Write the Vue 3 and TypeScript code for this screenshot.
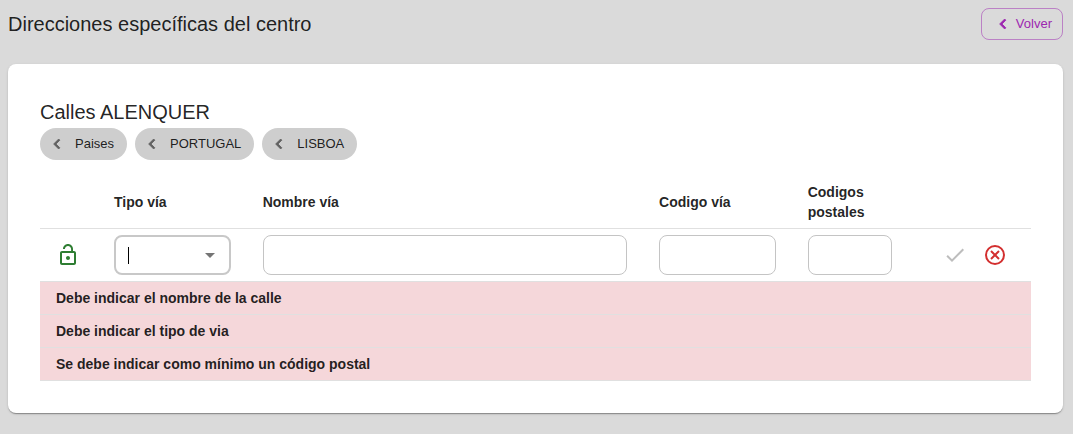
<script setup lang="ts">
import { ref } from 'vue'

const crumbs: string[] = ['Paises', 'PORTUGAL', 'LISBOA']

const errors: string[] = [
  'Debe indicar el nombre de la calle',
  'Debe indicar el tipo de via',
  'Se debe indicar como mínimo un código postal',
]

const streetType = ref('')
const streetName = ref('')
const streetCode = ref('')
const postalCodes = ref('')
</script>

<template>
  <div class="page">
    <header class="topbar">
      <h1 class="title">Direcciones específicas del centro</h1>
      <button type="button" class="back">
        <svg class="chevron" viewBox="0 0 24 24" aria-hidden="true">
          <path d="M15.41 7.41 14 6l-6 6 6 6 1.41-1.41L10.83 12z" />
        </svg>
        Volver
      </button>
    </header>

    <main class="card">
      <h2 class="title">Calles ALENQUER</h2>
      <nav class="crumbs">
        <button v-for="crumb in crumbs" :key="crumb" type="button" class="chip">
          <svg class="chevron" viewBox="0 0 24 24" aria-hidden="true">
            <path d="M15.41 7.41 14 6l-6 6 6 6 1.41-1.41L10.83 12z" />
          </svg>
          {{ crumb }}
        </button>
      </nav>

      <table class="grid">
        <colgroup>
          <col class="col-lock" />
          <col class="col-type" />
          <col class="col-name" />
          <col class="col-code" />
          <col class="col-postal" />
          <col />
        </colgroup>
        <thead>
          <tr>
            <th></th>
            <th><label for="type">Tipo vía</label></th>
            <th><label for="name">Nombre vía</label></th>
            <th><label for="code">Codigo vía</label></th>
            <th><label for="postal">Codigos postales</label></th>
            <th></th>
          </tr>
        </thead>
        <tbody>
          <tr>
            <td>
              <button type="button" class="icon-button lock" aria-label="Desbloqueado">
                <svg viewBox="0 0 24 24" aria-hidden="true">
                  <path
                    d="M12 17c1.1 0 2-.9 2-2s-.9-2-2-2-2 .9-2 2 .9 2 2 2zm6-9h-1V6c0-2.76-2.24-5-5-5S7 3.24 7 6h1.9c0-1.71 1.39-3.1 3.1-3.1 1.71 0 3.1 1.39 3.1 3.1v2H6c-1.1 0-2 .9-2 2v10c0 1.1.9 2 2 2h12c1.1 0 2-.9 2-2V10c0-1.1-.9-2-2-2zm0 12H6V10h12v10z"
                  />
                </svg>
              </button>
            </td>
            <td>
              <div class="combo">
                <span class="caret"></span>
                <input id="type" v-model="streetType" class="combo-input" role="combobox" aria-expanded="false" />
                <button type="button" class="combo-toggle" aria-label="Abrir">
                  <svg viewBox="0 0 24 24" aria-hidden="true"><path d="m7 10 5 5 5-5z" /></svg>
                </button>
              </div>
            </td>
            <td><input id="name" v-model="streetName" class="field" type="text" /></td>
            <td><input id="code" v-model="streetCode" class="field" type="text" /></td>
            <td><input id="postal" v-model="postalCodes" class="field" type="text" /></td>
            <td>
              <div class="actions">
                <button type="button" class="icon-button accept" aria-label="Guardar" disabled>
                  <svg viewBox="0 0 24 24" aria-hidden="true">
                    <path d="M9 16.17 4.83 12l-1.42 1.41L9 19 21 7l-1.41-1.41z" />
                  </svg>
                </button>
                <button type="button" class="icon-button cancel" aria-label="Cancelar">
                  <svg viewBox="0 0 24 24" aria-hidden="true">
                    <circle cx="12" cy="12" r="9" />
                    <path d="m8 8 8 8M16 8l-8 8" />
                  </svg>
                </button>
              </div>
            </td>
          </tr>
          <tr v-for="error in errors" :key="error" class="error">
            <td colspan="6">{{ error }}</td>
          </tr>
        </tbody>
      </table>
    </main>
  </div>
</template>

<style>
html,
body {
  min-height: 100%;
  background: #dadada;
}
</style>

<style scoped>
.page {
  box-sizing: border-box;
  padding: 8px 10px 20px 8px;
  font-family: 'Liberation Sans', Arial, sans-serif;
  font-size: 14px;
  line-height: 20px;
  color: rgba(0, 0, 0, 0.87);
}

svg {
  display: block;
  fill: currentColor;
}

button,
input {
  box-sizing: border-box;
  margin: 0;
  font: inherit;
  color: inherit;
}

.topbar {
  display: flex;
  align-items: center;
  justify-content: space-between;
  margin-bottom: 24px;
}

.title {
  margin: 0;
  font-size: 20px;
  font-weight: 400;
  line-height: 32px;
}

.back {
  display: flex;
  align-items: center;
  gap: 3px;
  height: 32px;
  padding: 0 10px 0 11px;
  border: 1px solid rgba(156, 39, 176, 0.5);
  border-radius: 8px;
  background: transparent;
  color: #9c27b0;
  font-size: 13px;
}

.chevron {
  width: 20px;
  height: 20px;
  stroke: currentColor;
}

.card {
  padding: 32px;
  border-radius: 8px;
  background: #fff;
  box-shadow:
    0 2px 1px -1px rgba(0, 0, 0, 0.2),
    0 1px 1px 0 rgba(0, 0, 0, 0.14),
    0 1px 3px 0 rgba(0, 0, 0, 0.12);
}

.crumbs {
  display: flex;
  gap: 8px;
  margin-bottom: 16px;
}

.chip {
  display: flex;
  align-items: center;
  gap: 8px;
  height: 32px;
  padding: 0 13px 0 7px;
  border: 0;
  border-radius: 16px;
  background: #cecece;
  font-size: 13px;
}

.chip .chevron {
  color: #616161;
}

.grid {
  width: 100%;
  table-layout: fixed;
  border-collapse: separate;
  border-spacing: 0;
}

.col-lock {
  width: 58px;
}

.col-type,
.col-code {
  width: 15%;
}

.col-name {
  width: 40%;
}

.col-postal {
  width: 116px;
}

th,
td {
  padding: 6px 16px;
  border-bottom: 1px solid #e0e0e0;
  text-align: left;
}

th {
  font-weight: 700;
}

.icon-button {
  display: block;
  padding: 0;
  border: 0;
  background: transparent;
}

.icon-button svg {
  width: 24px;
  height: 24px;
}

.lock {
  color: #2e7d32;
}

.accept {
  color: #bdbdbd;
}

.cancel {
  color: #d32f2f;
}

.cancel svg {
  fill: none;
  stroke: currentColor;
  stroke-width: 2;
}

.actions {
  display: flex;
  align-items: center;
  justify-content: flex-end;
  gap: 16px;
  padding-right: 8px;
}

.field {
  display: block;
  width: 100%;
  height: 40px;
  padding: 8px 14px;
  border: 1px solid #c4c4c4;
  border-radius: 8px;
  background: #fff;
}

.combo {
  box-sizing: border-box;
  display: flex;
  align-items: center;
  height: 40px;
  padding: 0 7px 0 12px;
  border: 2px solid #c8c8c8;
  border-radius: 8px;
}

.caret {
  width: 1px;
  height: 17px;
  background: #000;
}

.combo-input {
  flex: 1;
  min-width: 0;
  padding: 0;
  border: 0;
  outline: 0;
  background: transparent;
}

.combo-toggle {
  padding: 0;
  border: 0;
  background: transparent;
  color: #757575;
}

.combo-toggle svg {
  width: 24px;
  height: 24px;
}

.error td {
  background: #f5d7da;
  font-weight: 700;
}
</style>
